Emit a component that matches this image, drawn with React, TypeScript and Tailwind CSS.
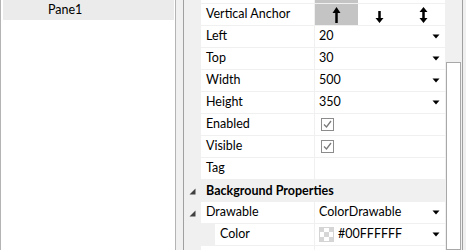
import type { ReactNode } from 'react'

const font = { fontFamily: 'Lato, "Noto Sans", sans-serif' }

function Caret() {
  return (
    <svg width="8" height="5" viewBox="0 0 8 5" className="shrink-0">
      <path d="M0.5 0.5h7L4 4.5z" fill="#000" />
    </svg>
  )
}

function Expander() {
  return (
    <svg width="7" height="7" viewBox="0 0 7 7">
      <path d="M6.5 0.5v6h-6z" fill="#404040" />
    </svg>
  )
}

function Check() {
  return (
    <div className="w-[13px] h-[13px] border border-[#8c8c8c] bg-white flex items-center justify-center">
      <svg width="11" height="11" viewBox="0 0 11 11">
        <path d="M2 5.5l2.5 2.5 4.5-6" fill="none" stroke="#7a7a7a" strokeWidth="1.3" />
      </svg>
    </div>
  )
}

function Swatch() {
  const cells = [1, 0, 1, 0, 1, 0, 1, 0, 1]
  return (
    <div className="grid grid-cols-3 w-[15px] h-[15px] border border-[#d4d4d4]">
      {cells.map((c, i) => (
        <div key={i} className={c ? 'bg-[#d6d6d6]' : 'bg-white'} />
      ))}
    </div>
  )
}

function ArrowUp() {
  return (
    <svg width="9" height="16" viewBox="0 0 9 16">
      <path d="M4.5 0L8.5 6H5.75V16H3.25V6H0.5z" fill="#000" />
    </svg>
  )
}

function ArrowDown() {
  return (
    <svg width="9" height="12" viewBox="0 0 9 12">
      <path d="M3.25 0H5.75V7H8.5L4.5 12L0.5 7H3.25z" fill="#000" />
    </svg>
  )
}

function ArrowBoth() {
  return (
    <svg width="9" height="16" viewBox="0 0 9 16">
      <path d="M4.5 0L8.5 5H5.75V11H8.5L4.5 16L0.5 11H3.25V5H0.5z" fill="#000" />
    </svg>
  )
}

type RowProps = {
  label: string
  children?: ReactNode
  indent?: boolean
  expanded?: boolean
}

function Row({ label, children, indent, expanded }: RowProps) {
  return (
    <div className="flex h-[22px] shrink-0">
      <div className={`shrink-0 flex items-center justify-center ${indent ? 'w-[31px]' : 'w-[17px]'}`}>
        {expanded && <Expander />}
      </div>
      <div
        className={`shrink-0 bg-white border-b border-r border-[#f0f0f0] pl-[5px] flex items-center ${
          indent ? 'w-[100px]' : 'w-[114px]'
        }`}
      >
        {label}
      </div>
      <div className="w-[130px] shrink-0 bg-white border-b border-[#f0f0f0] flex items-center pl-[4px] pr-[5px]">
        {children}
      </div>
    </div>
  )
}

function Dropdown({ value, lead }: { value: string; lead?: ReactNode }) {
  return (
    <div className="flex items-center w-full">
      {lead}
      <span className="flex-1">{value}</span>
      <Caret />
    </div>
  )
}

export default function App() {
  return (
    <div className="w-[466px] h-[250px] flex bg-[#f0f0f0] text-[12.5px] text-black overflow-hidden" style={font}>
      <div className="w-[176px] shrink-0 bg-white border-l border-r border-[#b4b4b4] pl-[2px] pr-px">
        <div className="h-[20px] bg-[#ebebeb] flex items-center pl-[45px]">Pane1</div>
      </div>

      <div className="w-[7px] shrink-0" />

      <div className="w-[280px] shrink-0 flex border-l border-r border-[#a0a0a0] bg-[#f0f0f0]">
        <div className="w-[261px] shrink-0 flex flex-col">
          <div className="flex h-[4px] shrink-0">
            <div className="w-[17px] shrink-0" />
            <div className="w-[114px] shrink-0 bg-white border-b border-r border-[#f0f0f0]" />
            <div className="w-[43px] shrink-0 bg-[#c4c4c4] border-b border-[#f0f0f0]" />
            <div className="flex-1 bg-white border-b border-[#f0f0f0]" />
          </div>

          <div className="flex h-[22px] shrink-0">
            <div className="w-[17px] shrink-0" />
            <div className="w-[114px] shrink-0 bg-white border-b border-r border-[#f0f0f0] pl-[5px] flex items-center">
              Vertical Anchor
            </div>
            <div className="w-[130px] shrink-0 bg-white border-b border-[#f0f0f0] grid grid-cols-3">
              <div className="bg-[#c4c4c4] flex items-end justify-center pb-[2px]">
                <ArrowUp />
              </div>
              <div className="flex items-end justify-center pb-[2px]">
                <ArrowDown />
              </div>
              <div className="flex items-end justify-center pb-[2px]">
                <ArrowBoth />
              </div>
            </div>
          </div>

          <Row label="Left">
            <Dropdown value="20" />
          </Row>
          <Row label="Top">
            <Dropdown value="30" />
          </Row>
          <Row label="Width">
            <Dropdown value="500" />
          </Row>
          <Row label="Height">
            <Dropdown value="350" />
          </Row>
          <Row label="Enabled">
            <div className="pl-[2px]">
              <Check />
            </div>
          </Row>
          <Row label="Visible">
            <div className="pl-[2px]">
              <Check />
            </div>
          </Row>
          <Row label="Tag" />

          <div className="flex h-[22px] shrink-0 items-center font-bold">
            <div className="w-[17px] shrink-0 flex items-center justify-center">
              <Expander />
            </div>
            <div className="pl-[5px]">Background Properties</div>
          </div>

          <Row label="Drawable" expanded>
            <Dropdown value="ColorDrawable" />
          </Row>
          <Row label="Color" indent>
            <Dropdown
              value="#00FFFFFF"
              lead={
                <div className="mr-[4px]">
                  <Swatch />
                </div>
              }
            />
          </Row>
          <Row label="" />
        </div>

        <div className="flex-1 flex flex-col pt-[62px] px-[1px]">
          <div className="flex-1 border border-[#a8a8a8] bg-white" />
        </div>
      </div>
    </div>
  )
}
